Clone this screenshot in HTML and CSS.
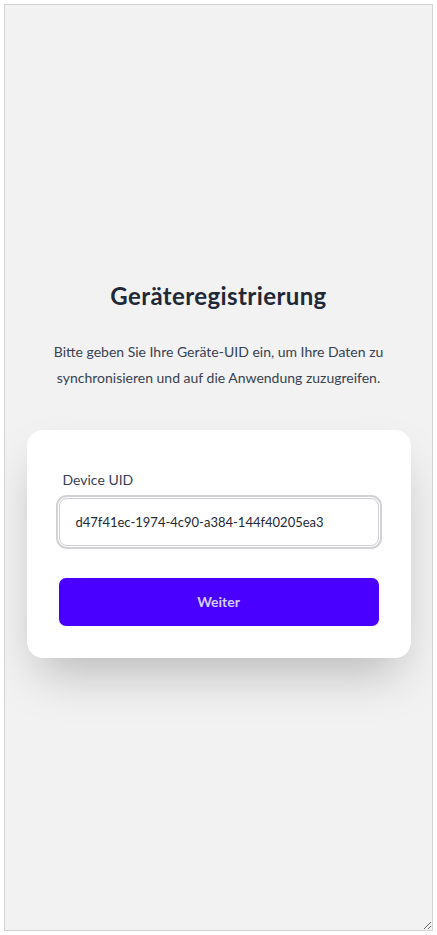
FILE: index.html
```html
<!DOCTYPE html>
<html lang="de">
<head>
<meta charset="utf-8">
<title>Geräteregistrierung</title>
<link rel="stylesheet" href="styles.css">
</head>
<body>
<div class="frame">
  <main class="page">
    <h1 class="title">Geräteregistrierung</h1>
    <p class="intro">Bitte geben Sie Ihre Geräte-UID ein, um Ihre Daten zu synchronisieren und auf die Anwendung zuzugreifen.</p>
    <form class="card">
      <label class="label" for="uid">Device UID</label>
      <input class="input" id="uid" type="text" value="d47f41ec-1974-4c90-a384-144f40205ea3">
      <button class="btn" type="button">Weiter</button>
    </form>
  </main>
</div>
</body>
</html>
```
FILE: styles.css
```css
* { box-sizing: border-box; }
html, body { margin: 0; padding: 0; background: #ffffff; }
body {
  padding: 4px;
  font-family: Lato, "Noto Sans", "Liberation Sans", sans-serif;
}
.frame {
  width: 429px;
  height: 927px;
  border: 1px solid #d3d3d3;
  background: #f2f2f2;
  overflow: auto;
  resize: both;
}
.page {
  min-height: 100%;
  display: flex;
  flex-direction: column;
  align-items: center;
  justify-content: center;
  padding: 4px 22px 0;
}
.title {
  margin: 0;
  font-size: 24px;
  line-height: 28px;
  font-weight: 700;
  letter-spacing: 0.4px;
  color: #1f2937;
}
.intro {
  margin: 29px 0 39px;
  max-width: 340px;
  text-align: center;
  font-size: 14px;
  line-height: 26px;
  color: #374151;
}
.card {
  width: 384px;
  background: #ffffff;
  border-radius: 16px;
  padding: 32px;
  display: flex;
  flex-direction: column;
  box-shadow: 0 25px 50px -12px rgba(0, 0, 0, 0.25);
}
.label {
  padding: 8px 4px;
  font-size: 14px;
  line-height: 20px;
  color: #374151;
}
.input {
  height: 48px;
  width: 100%;
  padding: 0 16px;
  border: 1px solid #cfcfd4;
  border-radius: 8px;
  box-shadow: 0 0 0 1px #ffffff, 0 0 0 3px #d2d2d6;
  font-family: inherit;
  font-size: 13px;
  color: #1f2937;
  background: #ffffff;
  outline: none;
}
.btn {
  margin-top: 32px;
  height: 48px;
  border: none;
  border-radius: 7px;
  background: #4a00ff;
  color: #d4cdff;
  font-family: inherit;
  font-size: 14px;
  font-weight: 700;
  cursor: pointer;
}
```
